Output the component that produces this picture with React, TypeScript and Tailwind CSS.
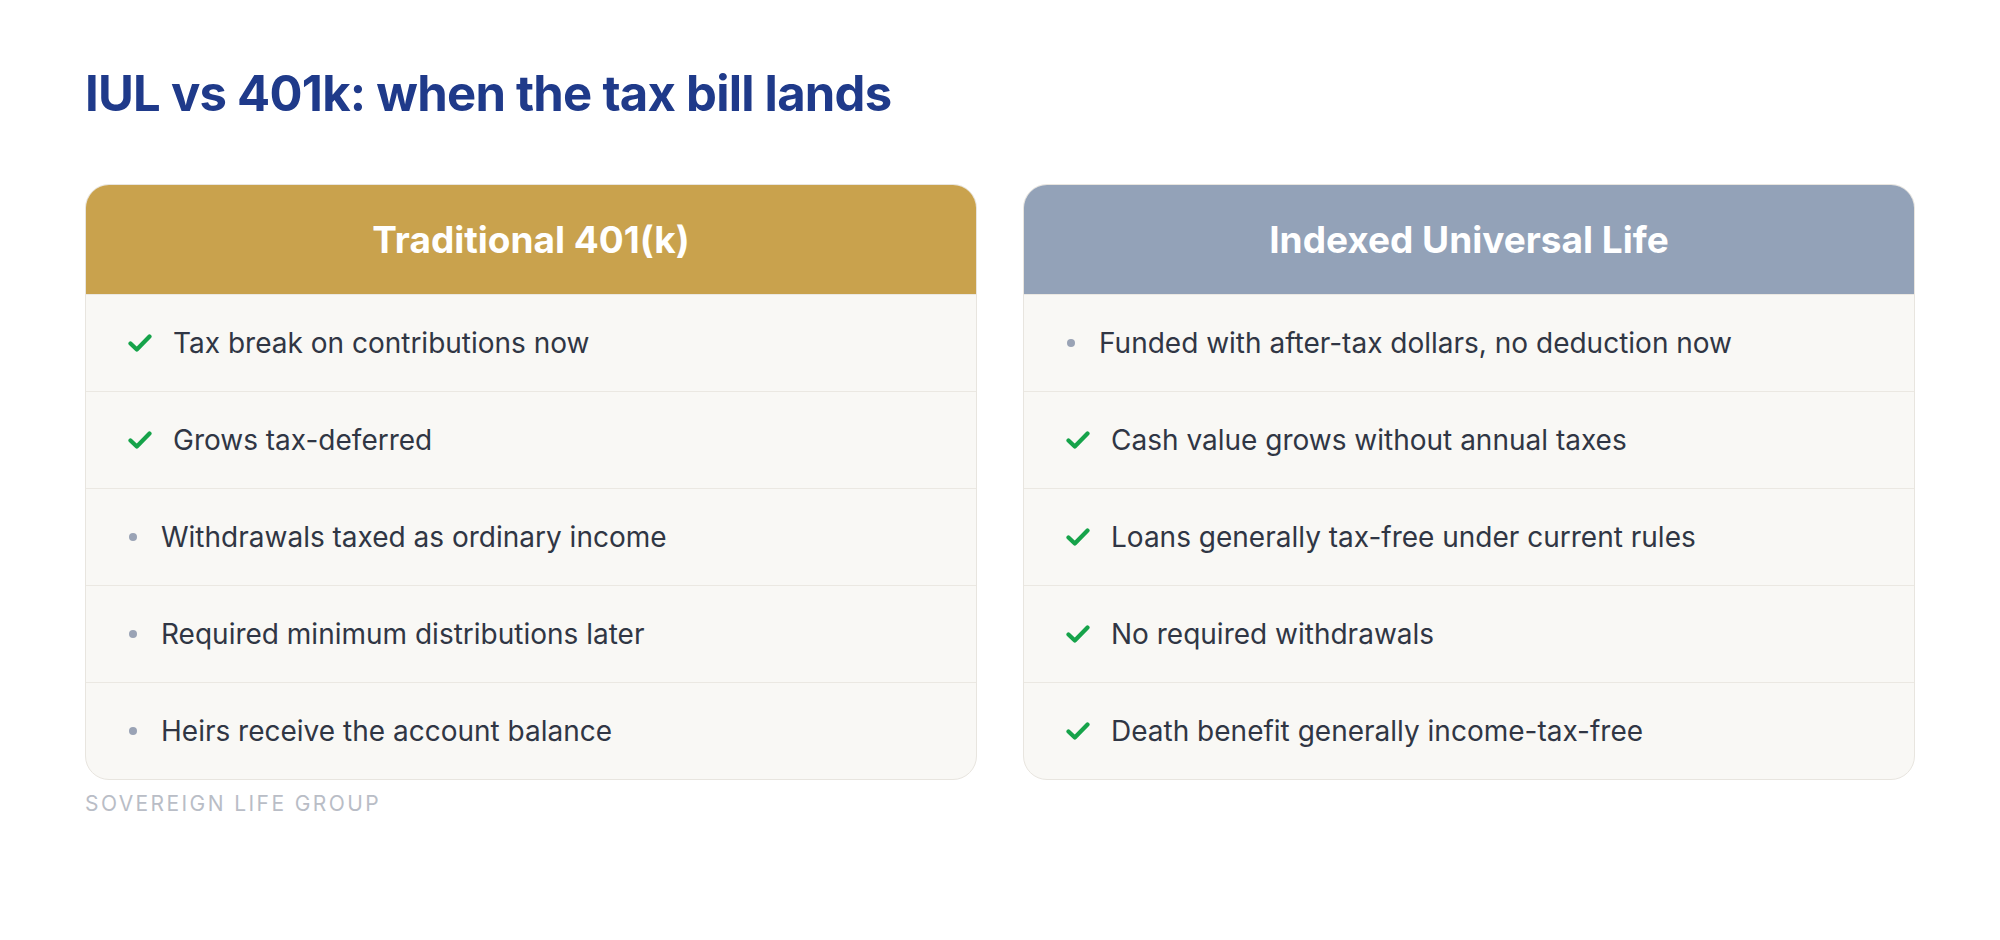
import { Fragment } from "react";

type Mark = "check" | "dot";

interface Column {
  title: string;
  headerClass: string;
  items: { mark: Mark; text: string }[];
}

const COLUMNS: Column[] = [
  {
    title: "Traditional 401(k)",
    headerClass: "bg-[#c9a24d]",
    items: [
      { mark: "check", text: "Tax break on contributions now" },
      { mark: "check", text: "Grows tax-deferred" },
      { mark: "dot", text: "Withdrawals taxed as ordinary income" },
      { mark: "dot", text: "Required minimum distributions later" },
      { mark: "dot", text: "Heirs receive the account balance" },
    ],
  },
  {
    title: "Indexed Universal Life",
    headerClass: "bg-[#93a2b8]",
    items: [
      { mark: "dot", text: "Funded with after-tax dollars, no deduction now" },
      { mark: "check", text: "Cash value grows without annual taxes" },
      { mark: "check", text: "Loans generally tax-free under current rules" },
      { mark: "check", text: "No required withdrawals" },
      { mark: "check", text: "Death benefit generally income-tax-free" },
    ],
  },
];

function Marker({ mark }: { mark: Mark }) {
  if (mark === "check") {
    return (
      <svg width="24" height="18" viewBox="0 0 24 18" className="shrink-0">
        <path
          d="M2.5 9.5 L8.8 15.5 L21.5 2.5"
          fill="none"
          stroke="#16a34a"
          strokeWidth="4.2"
          strokeLinecap="round"
          strokeLinejoin="round"
        />
      </svg>
    );
  }
  return <span className="ml-[1px] h-2 w-2 shrink-0 rounded-full bg-[#9aa3b5]" />;
}

export default function App() {
  return (
    <div
      className="min-h-[940px] w-full bg-white px-[85px] pt-[64px]"
      style={{ fontFamily: "Inter, 'Noto Sans', sans-serif" }}
    >
      <h1 className="text-[49px] font-bold leading-[60px] tracking-[-0.75px] text-[#1f3a8a]">
        IUL vs 401k: when the tax bill lands
      </h1>

      <div className="mt-[60px] grid grid-cols-2 gap-[46px]">
        {COLUMNS.map((col) => (
          <div
            key={col.title}
            className="overflow-hidden rounded-3xl border border-[#e8e5df] bg-[#f9f8f5]"
          >
            <div
              className={`${col.headerClass} flex h-[109px] items-center justify-center text-[37px] font-bold text-white`}
            >
              {col.title}
            </div>
            {col.items.map((item, i) => (
              <Fragment key={i}>
                <div
                  className={`flex h-[97px] items-center border-t border-[#ebe8e2] pl-[42px] text-[28px] text-[#303644] ${
                    item.mark === "check" ? "gap-[21px]" : "gap-[24px]"
                  }`}
                >
                  <Marker mark={item.mark} />
                  <span>{item.text}</span>
                </div>
              </Fragment>
            ))}
          </div>
        ))}
      </div>

      <div className="mt-[8px] text-[21px] uppercase tracking-[0.115em] text-[#b9bdc6]">
        Sovereign Life Group
      </div>
    </div>
  );
}
